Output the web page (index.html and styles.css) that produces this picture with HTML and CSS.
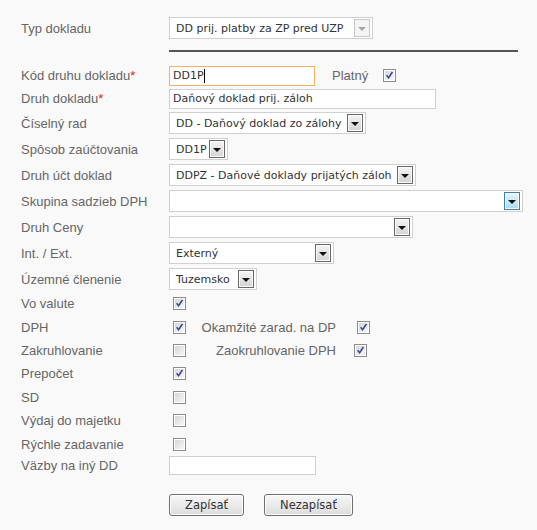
FILE: index.html
```html
<!DOCTYPE html>
<html lang="sk">
<head>
<meta charset="UTF-8">
<title>Druh dokladu</title>
<link rel="stylesheet" href="styles.css">
</head>
<body>
  <svg class="defs" width="0" height="0">
    <defs>
      <linearGradient id="cbFill" x1="0" y1="0" x2="1" y2="1">
        <stop offset="0" stop-color="#d6d6d6"/>
        <stop offset="1" stop-color="#f6f6f6"/>
      </linearGradient>
      <symbol id="cb-off" viewBox="0 0 13 13">
        <rect x="0.5" y="0.5" width="12" height="12" fill="#fff" stroke="#8c8c8c"/>
        <rect x="2" y="2" width="9" height="9" fill="url(#cbFill)"/>
      </symbol>
      <symbol id="cb-on" viewBox="0 0 13 13">
        <rect x="0.5" y="0.5" width="12" height="12" fill="#fff" stroke="#8c8c8c"/>
        <rect x="2" y="2" width="9" height="9" fill="url(#cbFill)"/>
        <path d="M3.6 6.3 L5.6 8.7 L9.4 3" fill="none" stroke="#3a4a94" stroke-width="1.6"/>
      </symbol>
    </defs>
  </svg>

  <div class="form">
    <div class="row">
      <span class="lbl">Typ dokladu</span>
      <div class="sel sel-disabled w-typ"><span class="sel-text">DD prij. platby za ZP pred UZP</span><span class="sel-btn"></span></div>
    </div>

    <div class="divider"></div>

    <div class="row row-field">
      <span class="lbl">Kód druhu dokladu<span class="req">*</span></span>
      <div class="inp inp-focus w-kod">DD1P<span class="caret"></span></div>
      <span class="side-lbl">Platný</span>
      <svg class="cb cb-platny"><use href="#cb-on"/></svg>
    </div>
    <div class="row row-field">
      <span class="lbl">Druh dokladu<span class="req">*</span></span>
      <div class="inp w-druh">Daňový doklad prij. záloh</div>
    </div>
    <div class="row">
      <span class="lbl">Číselný rad</span>
      <div class="sel w-rad"><span class="sel-text">DD - Daňový doklad zo zálohy</span><span class="sel-btn"></span></div>
    </div>
    <div class="row">
      <span class="lbl">Spôsob zaúčtovania</span>
      <div class="sel w-sposob"><span class="sel-text">DD1P</span><span class="sel-btn"></span></div>
    </div>
    <div class="row">
      <span class="lbl">Druh účt doklad</span>
      <div class="sel w-ucet"><span class="sel-text">DDPZ - Daňové doklady prijatých záloh</span><span class="sel-btn"></span></div>
    </div>
    <div class="row">
      <span class="lbl">Skupina sadzieb DPH</span>
      <div class="sel w-skup"><span class="sel-text"></span><span class="sel-btn sel-btn-hover"></span></div>
    </div>
    <div class="row">
      <span class="lbl">Druh Ceny</span>
      <div class="sel w-cena"><span class="sel-text"></span><span class="sel-btn"></span></div>
    </div>
    <div class="row">
      <span class="lbl">Int. / Ext.</span>
      <div class="sel w-int"><span class="sel-text">Externý</span><span class="sel-btn"></span></div>
    </div>
    <div class="row">
      <span class="lbl">Územné členenie</span>
      <div class="sel w-uzem"><span class="sel-text">Tuzemsko</span><span class="sel-btn"></span></div>
    </div>

    <div class="row row-chk">
      <span class="lbl">Vo valute</span>
      <svg class="cb"><use href="#cb-on"/></svg>
    </div>
    <div class="row row-chk">
      <span class="lbl">DPH</span>
      <svg class="cb"><use href="#cb-on"/></svg>
      <span class="sub-lbl">Okamžité zarad. na DP</span>
      <svg class="cb cb-okam"><use href="#cb-on"/></svg>
    </div>
    <div class="row row-chk">
      <span class="lbl">Zakruhlovanie</span>
      <svg class="cb"><use href="#cb-off"/></svg>
      <span class="sub-lbl">Zaokruhlovanie DPH</span>
      <svg class="cb cb-zaokr"><use href="#cb-on"/></svg>
    </div>
    <div class="row row-chk">
      <span class="lbl">Prepočet</span>
      <svg class="cb"><use href="#cb-on"/></svg>
    </div>
    <div class="row row-chk">
      <span class="lbl">SD</span>
      <svg class="cb"><use href="#cb-off"/></svg>
    </div>
    <div class="row row-chk">
      <span class="lbl">Výdaj do majetku</span>
      <svg class="cb"><use href="#cb-off"/></svg>
    </div>
    <div class="row row-chk">
      <span class="lbl">Rýchle zadavanie</span>
      <svg class="cb"><use href="#cb-off"/></svg>
    </div>
    <div class="row row-last">
      <span class="lbl">Väzby na iný DD</span>
      <div class="inp w-vazby"></div>
    </div>

    <div class="actions">
      <button class="btn w-zap">Zapísať</button>
      <button class="btn w-nezap">Nezapísať</button>
    </div>
  </div>
</body>
</html>
```

FILE: styles.css
```css
body {
  margin: 0;
  background-color: #f9f9f9;
  font-family: "Liberation Sans", Arial, sans-serif;
  font-size: 13px;
  color: #666;
}
.defs {
  display: block;
  width: 0;
  height: 0;
  overflow: hidden;
}
.form {
  padding: 15px 0 0 21px;
}
.row {
  display: flex;
  align-items: center;
  height: 26px;
}
.row-field {
  height: 23px;
}
.row-chk {
  height: 23.4px;
}
.row-last {
  height: 19px;
}
.lbl {
  width: 148px;
  flex-shrink: 0;
  white-space: nowrap;
}
.req {
  color: #e3211c;
}
.divider {
  width: 349px;
  height: 2px;
  margin: 9px 0 12px 148px;
  background-color: #555;
}

/* selecty */
.sel {
  display: flex;
  align-items: center;
  box-sizing: border-box;
  height: 22px;
  padding: 0 2px 0 6px;
  border: 1px solid #d0d0d0;
  background-color: #fff;
  font-family: "DejaVu Sans", Verdana, sans-serif;
  font-size: 11px;
  color: #333;
}
.sel-text {
  flex: 1;
  white-space: nowrap;
  overflow: hidden;
}
.sel-btn {
  display: flex;
  align-items: center;
  justify-content: center;
  box-sizing: border-box;
  width: 16px;
  height: 18px;
  border: 1px solid #686868;
  background: linear-gradient(#f5f5f5, #d3d3d3);
  box-shadow: inset 0 0 0 1px #fbfbfb;
}
.sel-btn::after {
  content: "";
  margin-top: 2px;
  border-left: 4px solid transparent;
  border-right: 4px solid transparent;
  border-top: 4px solid #111;
}
.sel-btn-hover {
  border-color: #3c7fb1;
  background: linear-gradient(#eaf6fd, #a9d9f5);
}
.sel-disabled .sel-btn {
  border-color: #c9c9c9;
  background: #f4f4f4;
  box-shadow: none;
}
.sel-disabled .sel-btn::after {
  border-top-color: #a5a5a5;
}
.w-typ { width: 204px; }
.w-rad { width: 197px; }
.w-sposob { width: 59px; }
.w-ucet { width: 247px; }
.w-skup { width: 354px; }
.w-cena { width: 244px; }
.w-int { width: 165px; }
.w-uzem { width: 88px; }

/* textove polia */
.inp {
  display: flex;
  align-items: center;
  box-sizing: border-box;
  height: 20px;
  padding: 0 3px;
  border: 1px solid #d0d0d0;
  background-color: #fff;
  font-family: "DejaVu Sans", Verdana, sans-serif;
  font-size: 11px;
  color: #333;
  white-space: nowrap;
}
.inp-focus {
  border-color: #f3b264;
}
.caret {
  width: 1px;
  height: 14px;
  background-color: #000;
}
.w-kod { width: 146px; }
.w-druh { width: 267px; }
.w-vazby { width: 147px; height: 19px; }

/* checkboxy */
.cb {
  width: 13px;
  height: 13px;
  margin-left: 4px;
  flex-shrink: 0;
}
.side-lbl {
  margin-left: 17px;
}
.cb-platny {
  margin-left: 15px;
}
.sub-lbl {
  width: 150px;
  text-align: right;
  white-space: nowrap;
}
.cb-okam {
  margin-left: 21px;
}
.cb-zaokr {
  margin-left: 18px;
}

/* tlacidla */
.actions {
  display: flex;
  gap: 20px;
  margin-top: 19px;
  padding-left: 148px;
}
.btn {
  box-sizing: border-box;
  height: 22px;
  padding: 0;
  border: 1px solid #707070;
  border-radius: 3px;
  background: linear-gradient(#f7f7f7 0%, #ebebeb 50%, #dcdcdc 100%);
  box-shadow: inset 0 0 0 1px #fcfcfc;
  font-family: "DejaVu Sans", Verdana, sans-serif;
  font-size: 11.5px;
  color: #333;
  cursor: pointer;
}
.w-zap { width: 75px; }
.w-nezap { width: 89px; }
```
